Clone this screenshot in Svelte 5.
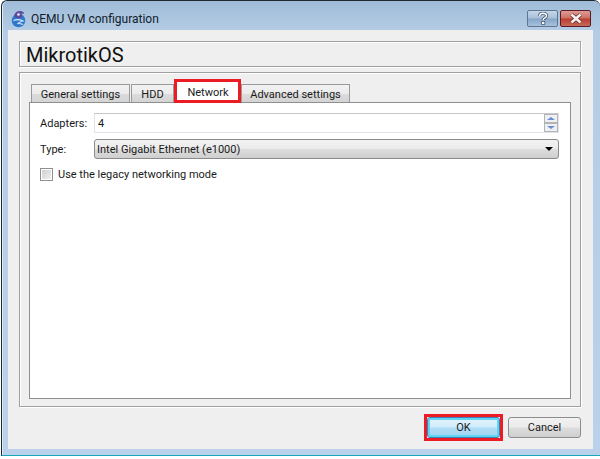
<script lang="ts">
  let tabs = [
    { label: "General settings", width: 99 },
    { label: "HDD", width: 43 },
    { label: "Network", width: 64, active: true },
    { label: "Advanced settings", width: 109 }
  ];
</script>

<div class="window">
  <header class="titlebar">
    <svg class="logo" width="16" height="18" viewBox="0 0 16 18">
      <circle cx="7.5" cy="10.5" r="6.8" fill="#2f78cc" />
      <path d="M3 6 Q4 1 9 1 Q13 1 13 4 L10.5 3.6 Q12 6 10.5 8 L5 8 Z" fill="#5b4a9e" />
      <circle cx="7.5" cy="4.5" r="1.3" fill="#eef0f8" />
      <path d="M2.5 10.5 Q7 8.5 12 11 Q8 12 7 13.5 Q10 13.5 12 14.5" stroke="#d8e8f8" stroke-width="1.1" fill="none" />
    </svg>
    <span class="title">QEMU VM configuration</span>
    <div class="controls">
      <div class="help">
        <svg width="12" height="13" viewBox="0 0 12 13">
          <path d="M2.5 4 Q3 1.2 6 1.2 Q9.5 1.2 9.5 3.8 Q9.5 5.4 7.5 6.2 Q6.2 6.8 6.2 8" stroke="#4a5a70" stroke-width="3.2" fill="none" />
          <path d="M2.5 4 Q3 1.2 6 1.2 Q9.5 1.2 9.5 3.8 Q9.5 5.4 7.5 6.2 Q6.2 6.8 6.2 8" stroke="#fff" stroke-width="1.4" fill="none" />
          <rect x="4.6" y="9.4" width="3.2" height="3" fill="#fff" stroke="#4a5a70" stroke-width="0.8" />
        </svg>
      </div>
      <div class="close">
        <svg width="16" height="11" viewBox="0 0 16 11">
          <path d="M3.5 1.5 L12.5 9.5 M12.5 1.5 L3.5 9.5" stroke="#5a2a28" stroke-width="4" />
          <path d="M3.5 1.5 L12.5 9.5 M12.5 1.5 L3.5 9.5" stroke="#f4f0f0" stroke-width="2.6" />
        </svg>
      </div>
    </div>
  </header>

  <div class="client">
    <div class="name-box">MikrotikOS</div>

    <section class="group">
      <div class="tabs">
        {#each tabs as tab}
          <div class="tab" class:active={tab.active} style="width: {tab.width}px">
            {tab.label}
            {#if tab.active}<span class="mark"></span>{/if}
          </div>
        {/each}
      </div>
      <div class="pane">
        <div class="row">
          <span class="label">Adapters:</span>
          <div class="spin">
            <span>4</span>
            <div class="arrows">
              <div class="arrow"><i class="up"></i></div>
              <div class="arrow"><i class="down"></i></div>
            </div>
          </div>
        </div>
        <div class="row type">
          <span class="label">Type:</span>
          <div class="combo">
            <span>Intel Gigabit Ethernet (e1000)</span>
            <i class="caret"></i>
          </div>
        </div>
        <label class="check">
          <span class="box"><span></span></span>
          Use the legacy networking mode
        </label>
      </div>
    </section>

    <footer class="actions">
      <div class="btn ok">OK<span class="mark"></span></div>
      <div class="btn">Cancel</div>
    </footer>
  </div>
</div>

<style>
  :global(body) {
    margin: 0;
    background: #fff;
  }

  .window {
    box-sizing: border-box;
    width: 599px;
    height: 456px;
    margin-left: 1px;
    padding: 0 7px 6px 6px;
    background: linear-gradient(180deg, #a0bcd8 0, #b4cce4 30px, #b9d1ea 100%);
    border: 1px solid #1c2a30;
    border-right: 0;
    border-bottom-color: #17a8b8;
    border-radius: 6px 6px 0 0;
    box-shadow: inset 1px 0 0 #dcebf5;
    font-family: Roboto, sans-serif;
    font-size: 11px;
    color: #1a1a1a;
    display: flex;
    flex-direction: column;
  }

  .titlebar {
    height: 29px;
    flex: none;
    display: flex;
    align-items: flex-start;
    margin-left: 3px;
  }

  .logo {
    margin-top: 9px;
    flex: none;
  }

  .title {
    margin: 9px 0 0 4px;
    font-size: 12px;
    line-height: 18px;
    color: #10202c;
  }

  .controls {
    margin-left: auto;
    margin-top: 9px;
    margin-right: 2px;
    display: flex;
    gap: 2px;
  }

  .help,
  .close {
    box-sizing: border-box;
    height: 17px;
    border-radius: 2px;
    display: flex;
    align-items: center;
    justify-content: center;
  }

  .help {
    width: 31px;
    border: 1px solid #5f7690;
    background: linear-gradient(180deg, #c4d6ea 0, #a9c0da 48%, #86a4c6 52%, #a8c2de 100%);
  }

  .close {
    width: 31px;
    border: 1px solid #5a1c24;
    background: linear-gradient(180deg, #dc9c94 0, #cf7064 48%, #b83c30 52%, #c86a58 100%);
  }

  .client {
    flex: 1;
    background: #efefef;
    padding: 11px 12px 0 11px;
    display: flex;
    flex-direction: column;
  }

  .name-box {
    box-sizing: border-box;
    height: 26px;
    border: 1px solid #a0a0a0;
    border-right-color: #a8a8a8;
    box-shadow: 1px 1px 0 #fff, inset 1px 1px 0 #fff;
    padding-left: 6px;
    font-size: 20px;
    line-height: 26px;
    color: #111;
    flex: none;
  }

  .group {
    box-sizing: border-box;
    height: 335px;
    margin-top: 5px;
    border: 1px solid #a0a0a0;
    box-shadow: 1px 1px 0 #fff, inset 1px 1px 0 #fff;
    padding: 11px 9px 0;
    flex: none;
  }

  .tabs {
    display: flex;
    gap: 1px;
    height: 18px;
    padding-left: 2px;
    position: relative;
    z-index: 1;
  }

  .tab {
    box-sizing: border-box;
    height: 18px;
    border: 1px solid #9a9a9a;
    border-bottom: 0;
    background: linear-gradient(180deg, #f2f2f2 0, #ebebeb 50%, #dcdcdc 52%, #d4d4d4 100%);
    text-align: center;
    line-height: 20px;
    white-space: nowrap;
    position: relative;
  }

  .tab.active {
    background: #fff;
    height: 20px;
    margin-top: -2px;
    margin-left: 1px;
    line-height: 22px;
    border: 0;
  }

  .mark {
    position: absolute;
    border: 3px solid #ed1c24;
    pointer-events: none;
  }

  .tab .mark {
    left: -2px;
    right: -1px;
    top: -3px;
    bottom: -1px;
  }

  .pane {
    box-sizing: border-box;
    height: 297px;
    background: #fff;
    border: 1px solid #8f8f8f;
    padding: 10px 10px 0 9px;
  }

  .row {
    display: flex;
    align-items: center;
    height: 20px;
  }

  .row.type {
    margin-top: 6px;
  }

  .label {
    width: 55px;
    flex: none;
    padding-left: 1px;
    margin-right: -1px;
  }

  .spin {
    box-sizing: border-box;
    flex: 1;
    height: 20px;
    border: 1px solid #e2e3ea;
    border-top-color: #c4c6cc;
    padding-left: 3px;
    display: flex;
    align-items: center;
    justify-content: space-between;
    margin-right: 1px;
  }

  .arrows {
    width: 14px;
    height: 18px;
  }

  .arrow {
    box-sizing: border-box;
    height: 9px;
    border: 1px solid #b4b4b4;
    background: #eef0f4;
    display: flex;
    align-items: center;
    justify-content: center;
  }

  .up {
    border: 4px solid transparent;
    border-top: 0;
    border-bottom: 3px solid #6a8cd0;
  }

  .down {
    border: 4px solid transparent;
    border-bottom: 0;
    border-top: 3px solid #6a8cd0;
  }

  .combo {
    box-sizing: border-box;
    flex: 1;
    height: 20px;
    border: 1px solid #8a8a8a;
    border-radius: 3px;
    background: linear-gradient(180deg, #f2f2f2 0, #ebebeb 48%, #dddddd 52%, #cfcfcf 100%);
    padding: 0 5px 0 2px;
    display: flex;
    align-items: center;
    justify-content: space-between;
    margin-right: 1px;
  }

  .caret {
    border: 4px solid transparent;
    border-bottom: 0;
    border-top: 4px solid #000;
  }

  .check {
    display: flex;
    align-items: center;
    gap: 5px;
    height: 20px;
    margin-top: 5px;
    padding-left: 1px;
  }

  .box {
    box-sizing: border-box;
    width: 13px;
    height: 13px;
    border: 1px solid #8e8f8f;
    background: #fff;
    padding: 1px;
    flex: none;
  }

  .box span {
    display: block;
    width: 9px;
    height: 9px;
    background: linear-gradient(135deg, #d0d0d0, #efefef);
  }

  .actions {
    display: flex;
    justify-content: flex-end;
    gap: 8px;
    margin-top: 10px;
  }

  .btn {
    box-sizing: border-box;
    width: 73px;
    height: 21px;
    border: 1px solid #8c8c8c;
    border-radius: 3px;
    background: linear-gradient(180deg, #f2f2f2 0, #ebebeb 48%, #dddddd 52%, #cfcfcf 100%);
    text-align: center;
    line-height: 19px;
    position: relative;
  }

  .btn.ok {
    border-color: #3c7fb1;
    box-shadow: inset 0 0 0 2px #5fd3f5;
    background: linear-gradient(180deg, #e4f4fc 0, #d0ecfa 48%, #b0def6 52%, #a0d4f0 100%);
  }

  .btn .mark {
    left: -4px;
    right: -4px;
    top: -4px;
    bottom: -4px;
  }
</style>
